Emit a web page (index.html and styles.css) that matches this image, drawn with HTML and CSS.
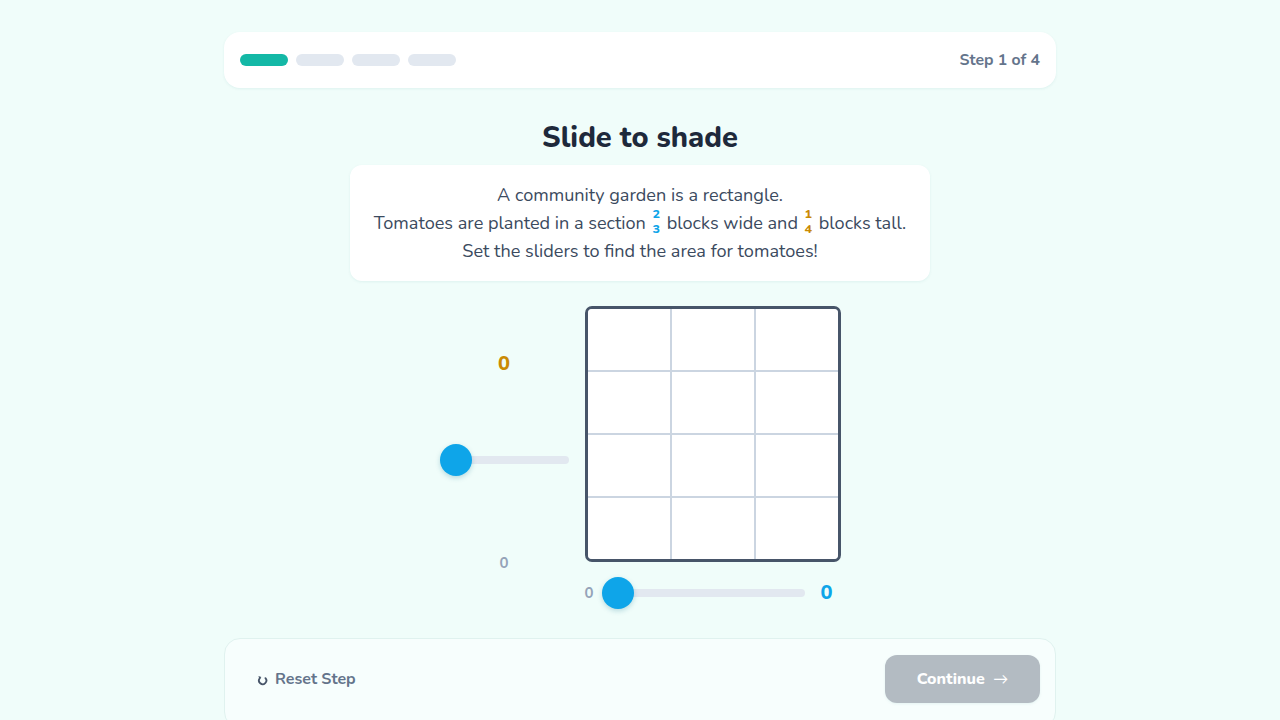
FILE: index.html
```html
<!DOCTYPE html>
<html lang="en">
<head>
<meta charset="utf-8">
<title>Slide to shade</title>
<link rel="stylesheet" href="styles.css">
</head>
<body>
<div class="page">
  <header class="topbar">
    <div class="progress">
      <span class="seg seg-on"></span>
      <span class="seg"></span>
      <span class="seg"></span>
      <span class="seg"></span>
    </div>
    <div class="step">Step 1 of 4</div>
  </header>

  <main class="main">
    <h1 class="title">Slide to shade</h1>
    <div class="prompt">
      <p>A community garden is a rectangle.</p>
      <p>Tomatoes are planted in a section <span class="frac frac-blue"><span>2</span><span>3</span></span> blocks wide and <span class="frac frac-gold"><span>1</span><span>4</span></span> blocks tall.</p>
      <p>Set the sliders to find the area for tomatoes!</p>
    </div>

    <div class="work">
      <div class="vcol">
        <div class="val val-gold">0</div>
        <div class="slider slider-v">
          <span class="track"></span>
          <span class="thumb"></span>
        </div>
        <div class="minlabel">0</div>
      </div>
      <div class="gridcol">
        <div class="grid">
          <div class="cell"></div><div class="cell"></div><div class="cell"></div>
          <div class="cell"></div><div class="cell"></div><div class="cell"></div>
          <div class="cell"></div><div class="cell"></div><div class="cell"></div>
          <div class="cell"></div><div class="cell"></div><div class="cell"></div>
        </div>
        <div class="hrow">
          <div class="minlabel">0</div>
          <div class="slider slider-h">
            <span class="track"></span>
            <span class="thumb"></span>
          </div>
          <div class="val val-blue">0</div>
        </div>
      </div>
    </div>
  </main>

  <footer class="footer">
    <button class="reset" type="button">
      <svg class="reset-icon" viewBox="0 0 12 12" width="11" height="11" aria-hidden="true">
        <path d="M3 3.6 A4 4 0 1 0 9.2 3.4" fill="none" stroke="#475569" stroke-width="2" stroke-linecap="round"/>
        <path d="M1.6 1.2 L4.8 2.2 L2.6 5.0 Z" fill="#475569"/>
      </svg>
      <span>Reset Step</span>
    </button>
    <button class="continue" type="button">Continue <span class="arrow">→</span></button>
  </footer>
</div>
</body>
</html>
```

FILE: styles.css
```css
* { box-sizing: border-box; }
html, body { margin: 0; padding: 0; }
body {
  background: #f0fdfa;
  font-family: "Nunito", "Lato", "Noto Sans", sans-serif;
  color: #334155;
  width: 1280px;
  height: 720px;
  overflow: hidden;
}
.page {
  width: 832px;
  margin: 0 auto;
  padding-top: 32px;
}
.topbar {
  height: 56px;
  background: #ffffff;
  border-radius: 16px;
  box-shadow: 0 1px 3px rgba(15, 118, 110, 0.08);
  display: flex;
  align-items: center;
  justify-content: space-between;
  padding: 0 16px;
}
.progress { display: flex; gap: 8px; }
.seg {
  width: 48px;
  height: 12px;
  border-radius: 6px;
  background: #e2e8f0;
}
.seg-on { background: #14b8a6; }
.step {
  font-size: 15.8px;
  font-weight: 700;
  color: #64748b;
}
.main {
  display: flex;
  flex-direction: column;
  align-items: center;
}
.title {
  margin: 31px 0 0;
  font-size: 29px;
  line-height: 38px;
  font-weight: 800;
  color: #1e293b;
}
.prompt {
  margin-top: 8px;
  width: 580px;
  background: #ffffff;
  border-radius: 12px;
  box-shadow: 0 1px 3px rgba(15, 118, 110, 0.08);
  padding: 16px 16px 16px;
  text-align: center;
  font-size: 18.1px;
  line-height: 28px;
  color: #3b4a5e;
}
.prompt p { margin: 0; }
.frac {
  display: inline-flex;
  flex-direction: column;
  align-items: center;
  vertical-align: middle;
  font-size: 12.5px;
  line-height: 15px;
  font-weight: 800;
  margin: -8px 2px 0;
  gap: 0;
}
.frac-blue { color: #0ea5e9; }
.frac-gold { color: #ca8a04; }

.work {
  margin-top: 25px;
  display: flex;
  gap: 16px;
}
.vcol {
  width: 129px;
  height: 268px;
  display: flex;
  flex-direction: column;
  align-items: center;
}
.val {
  font-size: 20px;
  font-weight: 800;
  line-height: 24px;
}
.val-gold { color: #ca8a04; margin-top: 46px; }
.val-blue { color: #0ea5e9; width: 20px; text-align: center; margin-left: 4px; }
.minlabel {
  font-size: 15px;
  font-weight: 700;
  color: #94a3b8;
  line-height: 20px;
}
.vcol .minlabel { margin-top: auto; margin-bottom: 1px; }
.vcol .slider { margin-top: 68px; }

.slider {
  position: relative;
  height: 32px;
  display: flex;
  align-items: center;
}
.slider-v { width: 129px; }
.slider-h { flex: 1; }
.track {
  width: 100%;
  height: 8px;
  border-radius: 4px;
  background: #e2e8f0;
}
.thumb {
  position: absolute;
  left: 0;
  top: 0;
  width: 32px;
  height: 32px;
  border-radius: 50%;
  background: #0ea5e9;
  box-shadow: 0 2px 5px rgba(14, 116, 144, 0.25);
}

.gridcol { display: flex; flex-direction: column; }
.grid {
  width: 256px;
  height: 256px;
  border: 3px solid #475569;
  border-radius: 7px;
  background: #cbd5e1;
  display: grid;
  grid-template-columns: repeat(3, 1fr);
  grid-template-rows: repeat(4, 1fr);
  gap: 2px;
  overflow: hidden;
}
.cell { background: #ffffff; }
.hrow {
  margin-top: 15px;
  display: flex;
  align-items: center;
  gap: 8px;
  width: 252px;
}
.hrow .minlabel { width: 9px; text-align: center; }

.footer {
  margin-top: 29px;
  height: 90px;
  background: #f7fefd;
  border: 1px solid #e0f2ef;
  border-radius: 16px;
  display: flex;
  justify-content: space-between;
  align-items: flex-start;
  padding: 16px 15px 0 32px;
}
.reset {
  border: none;
  background: none;
  padding: 0;
  height: 48px;
  display: flex;
  align-items: center;
  gap: 7px;
  font-family: inherit;
  font-size: 16px;
  font-weight: 700;
  color: #64748b;
}
.reset-icon { margin-top: 2px; }
.continue {
  width: 155px;
  height: 48px;
  border: none;
  border-radius: 12px;
  background: #b3bbc2;
  color: #ffffff;
  font-family: inherit;
  font-size: 16px;
  font-weight: 800;
  box-shadow: 0 1px 3px rgba(15, 118, 110, 0.08);
}
.arrow { margin-left: 4px; font-weight: 400; font-size: 15px; }
```
